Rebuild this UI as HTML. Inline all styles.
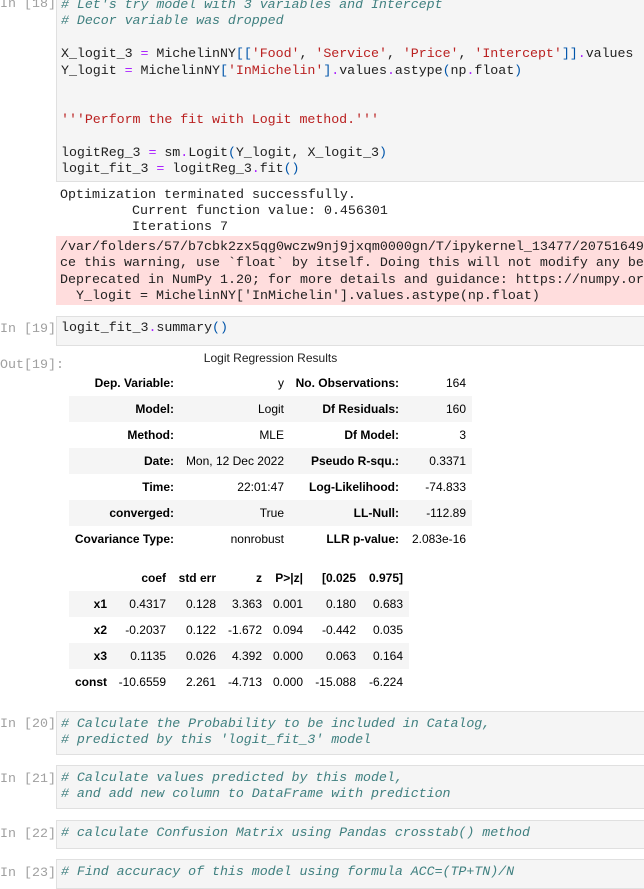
<!DOCTYPE html>
<html><head><meta charset="utf-8"><style>
*{margin:0;padding:0;box-sizing:border-box}
body{width:644px;height:888px;overflow:hidden;background:#fff;position:relative;font-family:"Liberation Mono",monospace;font-size:13.33px;color:#212121}
.p{position:absolute;left:0;width:54px;color:#a0a0a0;font-family:"Liberation Mono",monospace;font-size:13.33px;line-height:16.4px;white-space:pre}
.box{position:absolute;left:56px;width:600px;background:#f5f5f5;border:1px solid #e0e0e0;padding:4px 0 4px 4px;line-height:16.4px;white-space:pre;letter-spacing:-0.05px}
.c{color:#408080;font-style:italic}
.s{color:#BA2121}
.o{color:#AA22FF}
.b{color:#0055AA}
.out{position:absolute;left:56px;width:600px;padding-left:4px;line-height:16.2px;white-space:pre}
.err{background:#fdd}
table{position:absolute;border-collapse:collapse;font-family:"Liberation Sans",sans-serif;font-size:12px;color:#000}
td{height:26px;text-align:right;padding:0 6px 0 0;white-space:nowrap}
th{height:26px;text-align:right;padding:0 6px 0 0;font-weight:bold;white-space:nowrap}
tr.z td,tr.z th{background:#f5f5f5}
</style></head><body>

<div class="p" style="top:-3px">In [18]:</div>
<div class="box" style="top:-7px;height:189px"><span class="c"># Let's try model with 3 variables and Intercept</span>
<span class="c"># Decor variable was dropped</span>

X_logit_3 <span class="o">=</span> MichelinNY<span class="b">[[</span><span class="s">'Food'</span>, <span class="s">'Service'</span>, <span class="s">'Price'</span>, <span class="s">'Intercept'</span><span class="b">]]</span><span class="o">.</span>values
Y_logit <span class="o">=</span> MichelinNY<span class="b">[</span><span class="s">'InMichelin'</span><span class="b">]</span><span class="o">.</span>values<span class="o">.</span>astype<span class="b">(</span>np<span class="o">.</span>float<span class="b">)</span>


<span class="s">'''Perform the fit with Logit method.'''</span>

logitReg_3 <span class="o">=</span> sm<span class="o">.</span>Logit<span class="b">(</span>Y_logit, X_logit_3<span class="b">)</span>
logit_fit_3 <span class="o">=</span> logitReg_3<span class="o">.</span>fit<span class="b">()</span></div>

<div class="out" style="top:188px">Optimization terminated successfully.
         Current function value: 0.456301
         Iterations 7</div>
<div class="out err" style="top:236px;height:69px;padding-top:4px;line-height:16.4px">/var/folders/57/b7cbk2zx5qg0wczw9nj9jxqm0000gn/T/ipykernel_13477/20751649
ce this warning, use `float` by itself. Doing this will not modify any be
Deprecated in NumPy 1.20; for more details and guidance: https://numpy.or
  Y_logit = MichelinNY['InMichelin'].values.astype(np.float)</div>

<div class="p" style="top:322px">In [19]:</div>
<div class="box" style="top:316px;height:30px">logit_fit_3<span class="o">.</span>summary<span class="b">()</span></div>

<div class="p" style="top:358px">Out[19]:</div>
<div style="position:absolute;left:69px;width:403px;top:351px;text-align:center;font-family:'Liberation Sans',sans-serif;font-size:12px">Logit Regression Results</div>

<table style="left:69px;top:370px;width:403px">
<colgroup><col style="width:111px"><col style="width:110px"><col style="width:115px"><col style="width:67px"></colgroup>
<tr><th>Dep. Variable:</th><td>y</td><th>No. Observations:</th><td>164</td></tr>
<tr class="z"><th>Model:</th><td>Logit</td><th>Df Residuals:</th><td>160</td></tr>
<tr><th>Method:</th><td>MLE</td><th>Df Model:</th><td>3</td></tr>
<tr class="z"><th>Date:</th><td>Mon, 12 Dec 2022</td><th>Pseudo R-squ.:</th><td>0.3371</td></tr>
<tr><th>Time:</th><td>22:01:47</td><th>Log-Likelihood:</th><td>-74.833</td></tr>
<tr class="z"><th>converged:</th><td>True</td><th>LL-Null:</th><td>-112.89</td></tr>
<tr><th>Covariance Type:</th><td>nonrobust</td><th>LLR p-value:</th><td>2.083e-16</td></tr>
</table>

<table style="left:69px;top:565px;width:340px">
<colgroup><col style="width:44px"><col style="width:59px"><col style="width:50px"><col style="width:46px"><col style="width:41px"><col style="width:53px"><col style="width:47px"></colgroup>
<tr><th></th><th>coef</th><th>std err</th><th>z</th><th>P&gt;|z|</th><th>[0.025</th><th>0.975]</th></tr>
<tr class="z"><th>x1</th><td>0.4317</td><td>0.128</td><td>3.363</td><td>0.001</td><td>0.180</td><td>0.683</td></tr>
<tr><th>x2</th><td>-0.2037</td><td>0.122</td><td>-1.672</td><td>0.094</td><td>-0.442</td><td>0.035</td></tr>
<tr class="z"><th>x3</th><td>0.1135</td><td>0.026</td><td>4.392</td><td>0.000</td><td>0.063</td><td>0.164</td></tr>
<tr><th>const</th><td>-10.6559</td><td>2.261</td><td>-4.713</td><td>0.000</td><td>-15.088</td><td>-6.224</td></tr>
</table>

<div class="p" style="top:717px">In [20]:</div>
<div class="box" style="top:711px;height:44px;padding-top:5px"><span class="c"># Calculate the Probability to be included in Catalog,</span>
<span class="c"># predicted by this 'logit_fit_3' model</span></div>

<div class="p" style="top:772px">In [21]:</div>
<div class="box" style="top:765px;height:44px;padding-top:5px"><span class="c"># Calculate values predicted by this model,</span>
<span class="c"># and add new column to DataFrame with prediction</span></div>

<div class="p" style="top:827px">In [22]:</div>
<div class="box" style="top:820px;height:29px;padding-top:5px"><span class="c"># calculate Confusion Matrix using Pandas crosstab() method</span></div>

<div class="p" style="top:866px">In [23]:</div>
<div class="box" style="top:859px;height:30px;padding-top:5px"><span class="c"># Find accuracy of this model using formula ACC=(TP+TN)/N</span></div>

</body></html>
